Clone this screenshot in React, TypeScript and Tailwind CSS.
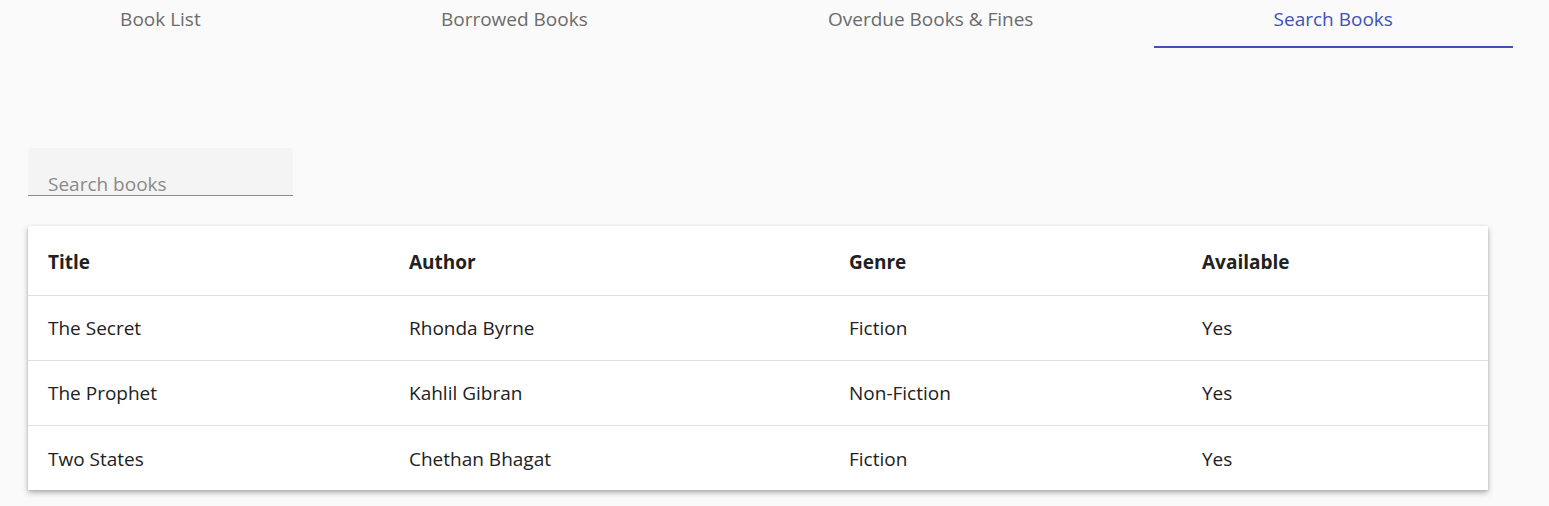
import { useState } from "react";

const tabs = ["Book List", "Borrowed Books", "Overdue Books & Fines", "Search Books"];

const books = [
  { title: "The Secret", author: "Rhonda Byrne", genre: "Fiction", available: "Yes" },
  { title: "The Prophet", author: "Kahlil Gibran", genre: "Non-Fiction", available: "Yes" },
  { title: "Two States", author: "Chethan Bhagat", genre: "Fiction", available: "Yes" },
];

const App = () => {
  const [active, setActive] = useState(3);
  const [query, setQuery] = useState("");

  return (
    <div className="min-h-screen bg-[#fafafa] font-['Open_Sans',sans-serif] text-[#212121]">
      {/* Tabs */}
      <div className="flex w-[1513px]">
        {tabs.map((tab, i) => (
          <button
            key={tab}
            onClick={() => setActive(i)}
            className={`flex-auto h-12 pb-2 text-[19px] border-b-2 ${
              active === i ? "text-[#3f51b5] border-[#3f51b5]" : "text-[#6b6b6b] border-transparent"
            }`}
          >
            {tab}
          </button>
        ))}
      </div>

      <div className="px-7 pt-[100px]">
        {/* Search */}
        <input
          value={query}
          onChange={(e) => setQuery(e.target.value)}
          placeholder="Search books"
          className="block w-[265px] h-[48px] pt-[28px] pb-1 px-5 bg-[#f4f4f4] rounded-t border-b border-[#8c8c8c] text-[19px] placeholder:text-[#8a8a8a] outline-none"
        />

        {/* Table */}
        <div className="mt-[30px] w-[1460px] bg-white shadow-[0_3px_6px_rgba(0,0,0,0.25),0_1px_3px_rgba(0,0,0,0.15)]">
          <table className="w-full text-left text-[19px]">
            <thead>
              <tr className="h-[69px] border-b border-[#e0e0e0]">
                <th className="w-[361px] pl-5 pt-1 font-bold">Title</th>
                <th className="w-[440px] pl-5 pt-1 font-bold">Author</th>
                <th className="w-[353px] pl-5 pt-1 font-bold">Genre</th>
                <th className="pl-5 pt-1 font-bold">Available</th>
              </tr>
            </thead>
            <tbody>
              {books.map((b, i) => (
                <tr key={b.title} className={`h-[65px] ${i < books.length - 1 ? "border-b border-[#e0e0e0]" : ""}`}>
                  <td className="pl-5 pt-0.5">{b.title}</td>
                  <td className="pl-5 pt-0.5">{b.author}</td>
                  <td className="pl-5 pt-0.5">{b.genre}</td>
                  <td className="pl-5 pt-0.5">{b.available}</td>
                </tr>
              ))}
            </tbody>
          </table>
        </div>
      </div>
    </div>
  );
};

export default App;
